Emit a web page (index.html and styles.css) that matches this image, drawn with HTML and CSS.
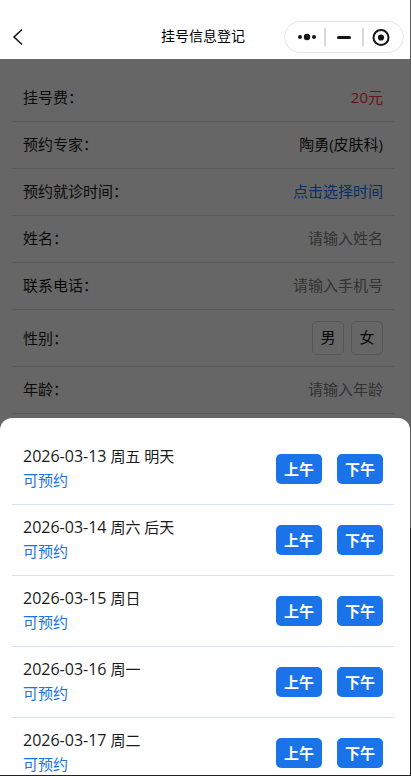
FILE: index.html
```html
<!DOCTYPE html>
<html lang="zh-CN">
<head>
<meta charset="utf-8">
<meta name="viewport" content="width=device-width, initial-scale=1">
<title>挂号信息登记</title>
<link rel="stylesheet" href="styles.css">
</head>
<body>
<div class="app">
  <header class="navbar">
    <button class="back" type="button" aria-label="返回">
      <svg width="12" height="18" viewBox="0 0 12 18" fill="none" stroke="#111" stroke-width="1.5"><path d="M10 1.5 2 9l8 7.5"/></svg>
    </button>
    <h1 class="title">挂号信息登记</h1>
    <div class="capsule">
      <button type="button" aria-label="更多">
        <svg width="20" height="18" viewBox="0 0 20 18" fill="#161616"><circle cx="3" cy="9" r="2"/><circle cx="10" cy="9" r="3.2"/><circle cx="17" cy="9" r="2"/></svg>
      </button>
      <button type="button" aria-label="最小化">
        <svg width="18" height="18" viewBox="0 0 18 18" stroke="#161616" stroke-width="3" stroke-linecap="round"><path d="M3.5 9.5h11"/></svg>
      </button>
      <button type="button" aria-label="关闭">
        <svg width="18" height="18" viewBox="0 0 18 18"><circle cx="9" cy="9.5" r="7.5" fill="none" stroke="#161616" stroke-width="2"/><circle cx="9" cy="9.5" r="3.1" fill="#161616"/></svg>
      </button>
    </div>
  </header>
  <main class="content">
    <form class="form">
      <div class="row"><span>挂号费：</span><span class="fee">20元</span></div>
      <div class="row"><span>预约专家：</span><span>陶勇(皮肤科)</span></div>
      <div class="row"><span>预约就诊时间：</span><button class="pick" type="button">点击选择时间</button></div>
      <div class="row"><label for="name">姓名：</label><input id="name" type="text" placeholder="请输入姓名"></div>
      <div class="row"><label for="phone">联系电话：</label><input id="phone" type="tel" placeholder="请输入手机号"></div>
      <div class="row row-gender"><span>性别：</span><div class="genders"><button type="button">男</button><button type="button">女</button></div></div>
      <div class="row"><label for="age">年龄：</label><input id="age" type="text" inputmode="numeric" placeholder="请输入年龄"></div>
    </form>
    <div class="mask">
      <section class="sheet" role="dialog" aria-label="预约就诊时间">
        <ul class="days">
          <li class="day"><div class="date"><p><time>2026-03-13</time> 周五 明天</p><p class="open">可预约</p></div><div class="slots"><button type="button">上午</button><button type="button">下午</button></div></li>
          <li class="day"><div class="date"><p><time>2026-03-14</time> 周六 后天</p><p class="open">可预约</p></div><div class="slots"><button type="button">上午</button><button type="button">下午</button></div></li>
          <li class="day"><div class="date"><p><time>2026-03-15</time> 周日</p><p class="open">可预约</p></div><div class="slots"><button type="button">上午</button><button type="button">下午</button></div></li>
          <li class="day"><div class="date"><p><time>2026-03-16</time> 周一</p><p class="open">可预约</p></div><div class="slots"><button type="button">上午</button><button type="button">下午</button></div></li>
          <li class="day"><div class="date"><p><time>2026-03-17</time> 周二</p><p class="open">可预约</p></div><div class="slots"><button type="button">上午</button><button type="button">下午</button></div></li>
        </ul>
      </section>
    </div>
  </main>
</div>
</body>
</html>
```

FILE: styles.css
```css
* {
  box-sizing: border-box;
  margin: 0;
  padding: 0;
}

body {
  height: 100vh;
  padding: 0 1px 1px 0;
  overflow: hidden;
  background: linear-gradient(#5c5c5c 68%, #222 68%);
  font: 15px/24px "Open Sans", "Noto Sans CJK SC", sans-serif;
  color: #1a1a1a;
}

button,
input {
  border: 0;
  background: none;
  font: inherit;
  color: inherit;
}

.app {
  display: flex;
  flex-direction: column;
  height: 100%;
  background: #fff;
}

.navbar {
  display: grid;
  grid-template-columns: 1fr auto 1fr;
  align-items: center;
  height: 59px;
  padding: 14px 6px 0 2px;
}

.back {
  display: flex;
  justify-self: start;
  padding: 0 10px;
}

.title {
  padding-bottom: 2px;
  font-size: 14px;
  font-weight: 400;
  color: #000;
}

.capsule {
  display: flex;
  justify-self: end;
  align-items: center;
  width: 120px;
  height: 32px;
  padding: 0 4px;
  border: 1px solid #e6e6e6;
  border-radius: 16px;
}

.capsule button {
  display: flex;
  flex: 1;
  justify-content: center;
}

.capsule button + button {
  border-left: 2px solid #d8d8d8;
}

.content {
  position: relative;
  flex: 1;
  min-height: 0;
  overflow: hidden;
}

.form {
  padding: 16px 16px 0 12px;
}

.row {
  display: flex;
  align-items: center;
  justify-content: space-between;
  padding: 10px 11px 12px;
  border-bottom: 1px solid #dde3ea;
}

.row-gender {
  padding: 11px;
}

.row input {
  flex: 1;
  min-width: 0;
  text-align: right;
}

.row input::placeholder {
  color: #808080;
  opacity: 1;
}

.fee {
  color: #f33;
}

.pick {
  color: #1a73e8;
}

.genders {
  display: flex;
  gap: 7px;
}

.genders button {
  width: 32px;
  height: 34px;
  padding-bottom: 2px;
  border: 1px solid #d8d8d8;
  border-radius: 5px;
}

.mask {
  position: absolute;
  inset: 0;
  display: flex;
  flex-direction: column;
  justify-content: flex-end;
  background: rgba(0, 0, 0, 0.6);
}

.sheet {
  height: 46vh;
  padding: 16px 16px 0 12px;
  overflow-y: auto;
  scrollbar-width: none;
  border-radius: 12px 12px 0 0;
  background: #fff;
}

.days {
  list-style: none;
}

.day {
  display: flex;
  align-items: center;
  justify-content: space-between;
  padding: 10px 11px;
  border-bottom: 1px solid #d3e3f5;
}

.date {
  padding-bottom: 2px;
}

.day time {
  font-size: 16px;
}

.open {
  color: #1a73e8;
}

.slots {
  display: flex;
  gap: 15px;
}

.slots button {
  width: 46px;
  height: 30px;
  border-radius: 5px;
  background: #1a73e8;
  font-weight: 700;
  color: #fff;
}
```
